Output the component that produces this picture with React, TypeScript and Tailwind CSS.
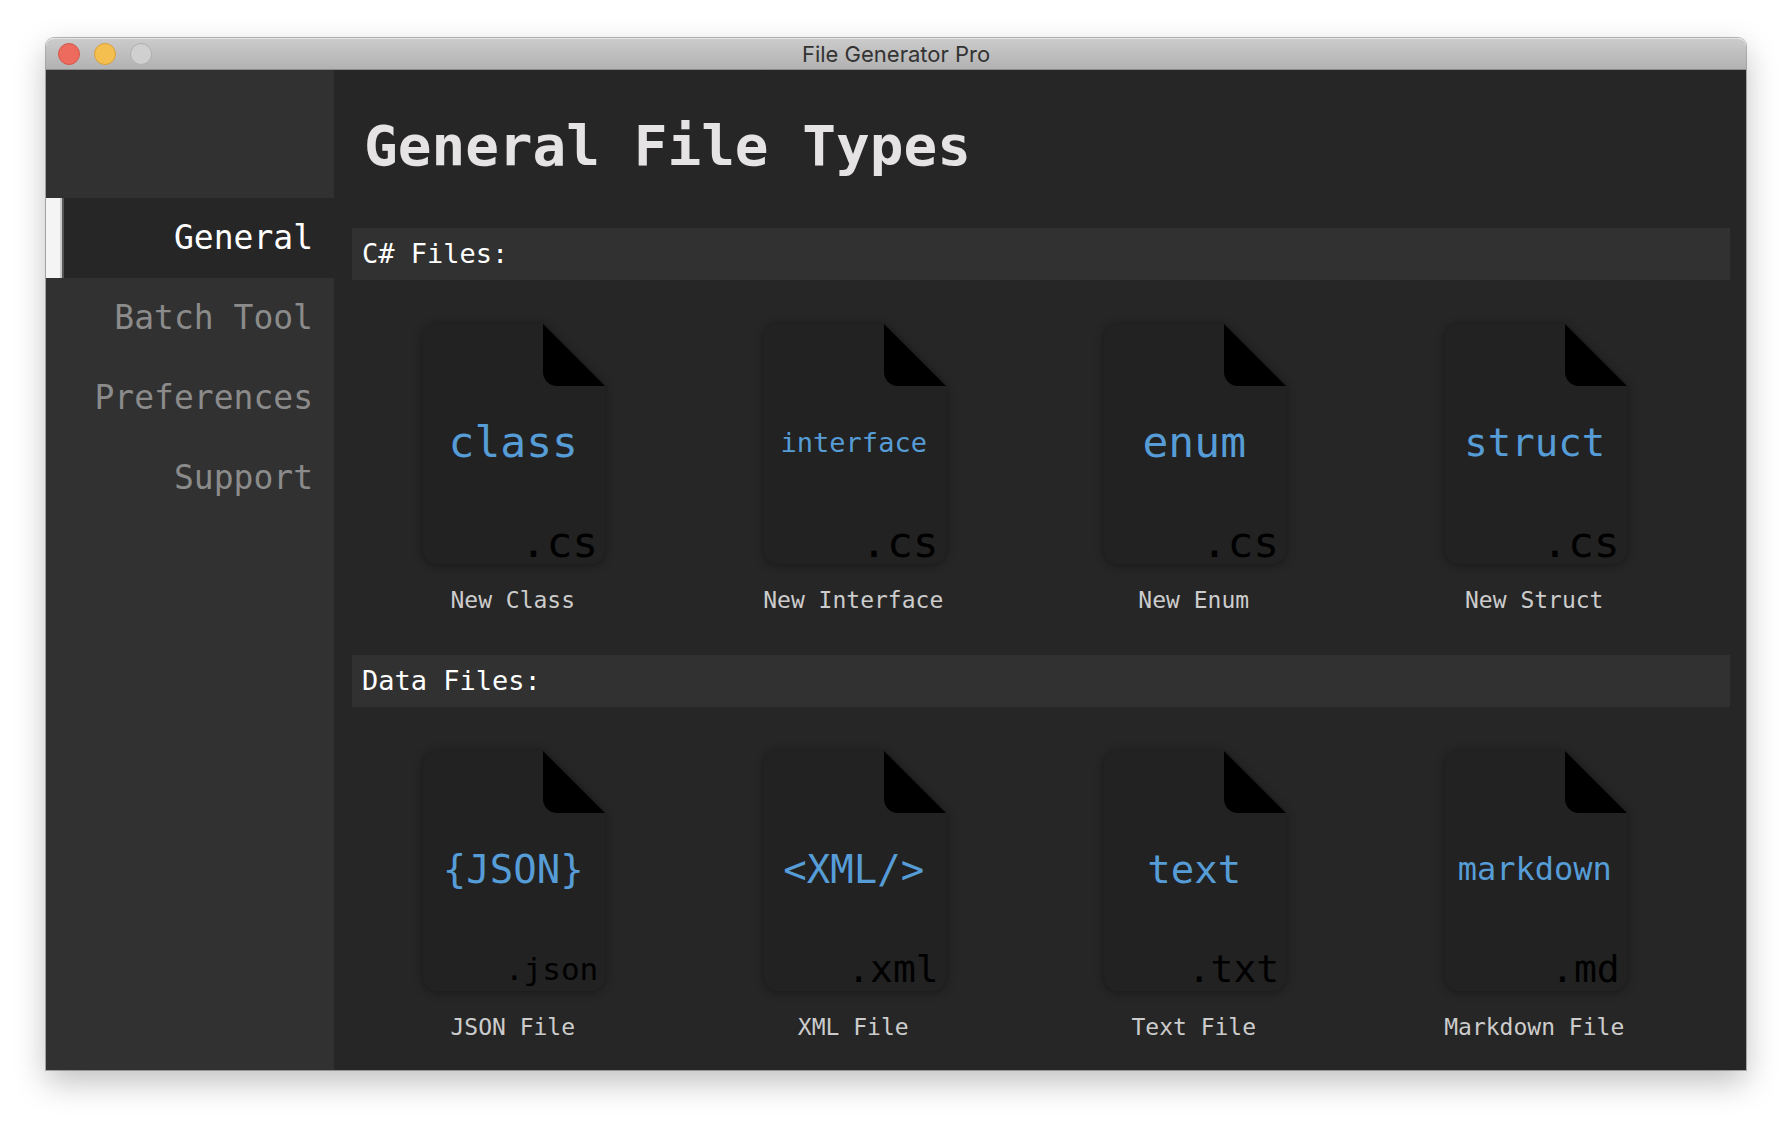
// App.tsx
import React from 'react';
import { useState } from 'react';
import clsx from 'clsx';

interface FileType {
    keyword: string;
    keywordSize: string;
    extension: string;
    extensionSize: string;
    label: string;
}

interface FileSectionProps {
    title: string;
    files: FileType[];
}

const pages = ["General", "Batch Tool", "Preferences", "Support"];

const csharpFiles: FileType[] = [
    { keyword: "class", keywordSize: "text-[43px]", extension: ".cs", extensionSize: "text-[43px]", label: "New Class" },
    { keyword: "interface", keywordSize: "text-[27px]", extension: ".cs", extensionSize: "text-[43px]", label: "New Interface" },
    { keyword: "enum", keywordSize: "text-[43px]", extension: ".cs", extensionSize: "text-[43px]", label: "New Enum" },
    { keyword: "struct", keywordSize: "text-[39px]", extension: ".cs", extensionSize: "text-[43px]", label: "New Struct" },
];

const dataFiles: FileType[] = [
    { keyword: "{JSON}", keywordSize: "text-[39px]", extension: ".json", extensionSize: "text-[31px]", label: "JSON File" },
    { keyword: "<XML/>", keywordSize: "text-[39px]", extension: ".xml", extensionSize: "text-[38px]", label: "XML File" },
    { keyword: "text", keywordSize: "text-[39px]", extension: ".txt", extensionSize: "text-[38px]", label: "Text File" },
    { keyword: "markdown", keywordSize: "text-[32px]", extension: ".md", extensionSize: "text-[38px]", label: "Markdown File" },
];

// The sheet of paper with the folded corner
const PageShape: React.FC = () => (
    <svg
        viewBox="0 0 182 240"
        aria-hidden="true"
        className="absolute inset-0 w-full h-full overflow-visible drop-shadow-[0_1px_5px_rgba(0,0,0,0.4)]"
    >
        <path d="M14 0H120L182 62V226A14 14 0 0 1 168 240H14A14 14 0 0 1 0 226V14A14 14 0 0 1 14 0Z" fill="#222222" />
        <path d="M120 0L182 62H134A14 14 0 0 1 120 48Z" fill="#000000" />
    </svg>
);

const FileButton: React.FC<{ file: FileType }> = ({ file }) => {
    return (
        <button type="button" className="flex flex-col items-center">
            <span className="relative w-[182px] h-[240px] block">
                <PageShape />
                <span className={clsx("absolute inset-0 pr-0.5 pb-1 flex items-center justify-center leading-none text-[#569cd6]", file.keywordSize)}>
                    {file.keyword}
                </span>
                <span className={clsx("absolute right-[7px] bottom-0 leading-[44px] text-black", file.extensionSize)}>
                    {file.extension}
                </span>
            </span>
            <span className="mt-5 pr-[3px] text-[23px] leading-8 text-[#cccccc]">{file.label}</span>
        </button>
    );
};

const FileSection: React.FC<FileSectionProps> = ({ title, files }) => {
    return (
        <section>
            <h2 className="ml-[18px] mr-4 pl-2.5 bg-[#313131] text-[27px] leading-[52px] text-white">{title}</h2>
            <div className="mt-11 ml-2.5 mr-10 grid grid-cols-4">
                {files.map((file) => (
                    <FileButton key={file.label} file={file} />
                ))}
            </div>
        </section>
    );
};

const TitleBar: React.FC = () => {
    return (
        <header className="h-8 px-3 grid grid-cols-[1fr_auto_1fr] items-center rounded-t-lg border-t border-t-[#e4e4e4] border-b border-b-[#8a8a8a] bg-linear-to-b from-[#cbcbcb] to-[#b2b2b2]">
            <div className="flex gap-3.5">
                <button type="button" aria-label="Close" className="size-[22px] rounded-full border border-[#d5564b] bg-[#ed6a5e]"></button>
                <button type="button" aria-label="Minimize" className="size-[22px] rounded-full border border-[#dba03b] bg-[#f5bf4f]"></button>
                <button type="button" aria-label="Zoom" className="size-[22px] rounded-full border border-[#b0b0b0] bg-[#d0d0d0]"></button>
            </div>
            <p className="font-[Inter,sans-serif] text-[22px] leading-7 text-[#333333]">File Generator Pro</p>
        </header>
    );
};

const App: React.FC = () => {
    const [currentPage, setCurrentPage] = useState("General");

    return (
        <div className="min-h-screen flex flex-col bg-white px-[46px] pt-[38px] pb-[54px] font-['DejaVu_Sans_Mono',monospace]">
            <div className="grow flex flex-col rounded-t-lg shadow-[0_0_0_1px_rgba(0,0,0,0.28),0_12px_32px_rgba(0,0,0,0.25)]">
                <TitleBar />
                <div className="grow flex">
                    {/* Sidebar */}
                    <nav className="w-72 shrink-0 pt-32 flex flex-col bg-[#313131]">
                        {pages.map((page) => (
                            <button
                                key={page}
                                type="button"
                                onClick={() => setCurrentPage(page)}
                                className={clsx(
                                    "h-20 flex items-center text-[33px]",
                                    page === currentPage ? "bg-[#262626] text-white" : "text-[#8b8b8b]"
                                )}
                            >
                                {page === currentPage && (
                                    <span className="w-[18px] h-full bg-[#f4f4f4] border-r-2 border-r-[#555555] shadow-[inset_-2px_0_0_#cccccc]"></span>
                                )}
                                <span className="grow pr-[21px] text-right">{page}</span>
                            </button>
                        ))}
                    </nav>
                    <main className="grow min-w-0 pt-11 pb-[26px] bg-[#262626]">
                        <h1 className="ml-[30px] text-[56px] leading-[64px] font-bold text-[#e5e3e4]">General File Types</h1>
                        <div className="mt-[50px] flex flex-col gap-[39px]">
                            <FileSection title="C# Files:" files={csharpFiles} />
                            <FileSection title="Data Files:" files={dataFiles} />
                        </div>
                    </main>
                </div>
            </div>
        </div>
    );
};

export default App;
